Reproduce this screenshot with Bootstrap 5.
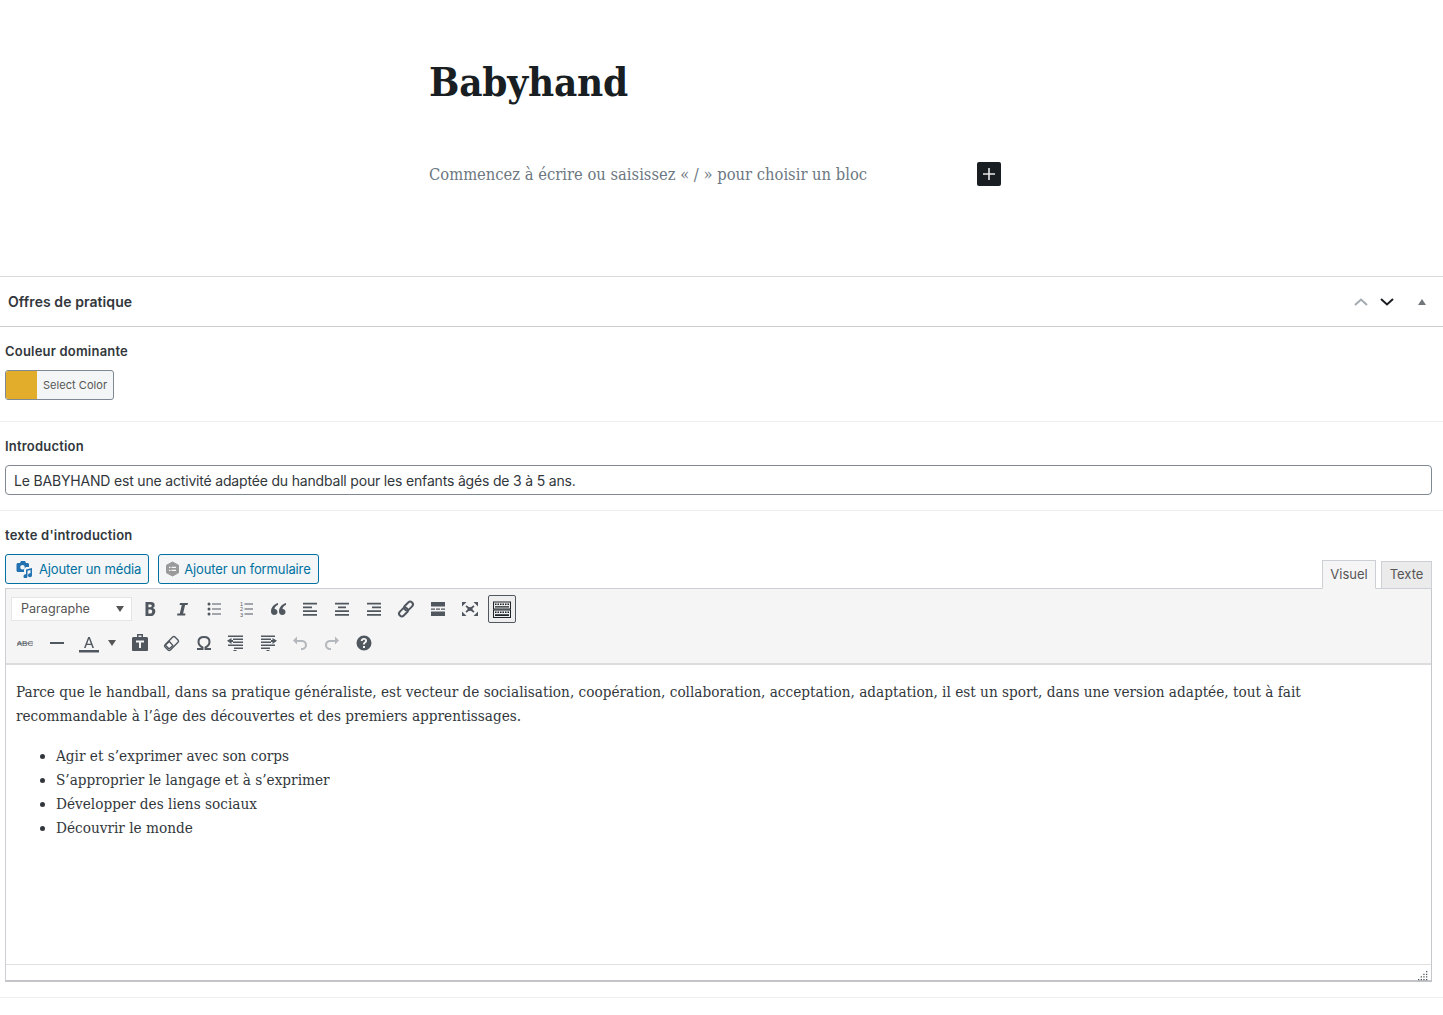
<!DOCTYPE html>
<html lang="fr">
<head>
<meta charset="utf-8">
<title>Babyhand</title>
<link href="https://cdn.jsdelivr.net/npm/bootstrap@5.3.0/dist/css/bootstrap.min.css" rel="stylesheet">
<style>
html,body{height:100%}
body{background:#fff;color:#32373c;font-family:"Inter","Liberation Sans",sans-serif;font-size:13px;overflow:hidden}
.serif-face{font-family:"DejaVu Serif Condensed","DejaVu Serif",serif}
.editor-head{height:276px;padding-left:429px;padding-top:53px}
.post-title{font-size:40px;font-weight:700;line-height:58px;color:#191e23;margin:0;letter-spacing:-.2px}
.appender-row{width:572px;margin-top:51px;height:24px}
.appender-text{font-size:16.4px;color:#6c7781;line-height:26px}
.plus-box{width:24px;height:24px;background:#191e23;border-radius:2px}
.box-head{height:51px;border-top:1px solid #d9d9d9;border-bottom:1px solid #ccc;padding:0 16px 0 8px}
.box-title{font-size:14px;font-weight:600;color:#32373c;letter-spacing:.08px}
.field-block{border-bottom:1px solid #eee;padding:0 11px 0 5px}
.block-color{height:95px;padding-top:15px}
.block-intro{height:89px;padding-top:15px}
.block-text{height:487px;padding-top:15px}
.field-label{font-size:13px;font-weight:600;line-height:18px;color:#32373c;height:18px;margin-bottom:10px;letter-spacing:.2px}
.color-pick{width:109px;height:30px;border:1px solid #7e8993;border-radius:3px;overflow:hidden;background:#f3f5f6}
.color-chip{width:31px;background:#e2ad2a}
.color-txt{font-size:11px;color:#555;padding-left:6px;line-height:28px;letter-spacing:.05px}
.intro-input{height:30px;border:1px solid #7e8993;border-radius:4px;font-size:14px;line-height:30px;padding:0 8px;color:#32373c;background:#fff;letter-spacing:-.18px}
.wp-btn{height:30px;border:1px solid #0071a1;border-radius:3px;background:#f3f5f6;color:#0071a1;font-size:13px;letter-spacing:-.13px;padding:0 7px 0 9px;gap:5px}
.wp-btn span{padding-top:1px}
.wp-btn-form{padding-left:6px;gap:4px}
.btn-strip{height:34px}
.tab-strip{align-self:flex-end;gap:5px}
.ed-tab{height:29px;width:54px;border:1px solid #ccd0d4;background:#f5f5f5;font-size:13px;color:#555;text-align:center;line-height:27px;margin-bottom:-1px;position:relative}
.ed-tab.is-on{border-bottom-color:#f5f5f5}
.ed-tab.is-off{background:#ebebeb;height:28px;width:51px;border-bottom-color:#ccd0d4;line-height:25px}
.ed-frame{border:1px solid #ccd0d4;border-bottom:2px solid #c3c4c7;border-right-color:#c5c8cb;height:394px}
.tool-area{background:#f5f5f5;height:76px;border-bottom:2px solid #dcdcde;padding:3px 5px 0}
.tool-row{height:34px}
.tool-row-low{margin-left:-2px}
.tool-btn{width:32px;height:34px;flex:none}
.tool-btn svg{display:block}
.fmt-select{width:121px;height:24px;background:#fff;border:1px solid #e5e5e5;font-size:12.6px;color:#555;padding:0 7px 0 9px;margin-right:2px}
.caret-down{width:0;height:0;border-left:4px solid transparent;border-right:4px solid transparent;border-top:6px solid #555}
.kbd-on{width:28px;height:28px;background:#eee;border:1px solid #50575e;border-radius:2px;margin:0 2px}
.caret-slot{width:20px;height:34px;margin-left:-4px;margin-right:3px;padding-left:7px}
.txt-body{height:299px;padding:15px 10px 0;font-size:15.2px;line-height:24px;color:#32373c}
.txt-body p{margin:0 0 16px;width:1320px}
.txt-body ul{margin:0;padding-left:40px}
.status-strip{height:17px;border-top:1px solid #e0e0e0;padding-right:3px}
</style>
</head>
<body>
<header class="editor-head serif-face">
  <h1 class="post-title">Babyhand</h1>
  <div class="appender-row d-flex justify-content-between align-items-start">
    <span class="appender-text">Commencez à écrire ou saisissez « / » pour choisir un bloc</span>
    <span class="plus-box d-flex align-items-center justify-content-center">
      <svg width="14" height="14" viewBox="0 0 14 14"><path d="M6.200 1h1.600v5.200H13v1.600H7.800V13H6.200V7.800H1V6.200h5.200z" fill="#e8e8e8"/></svg>
    </span>
  </div>
</header>

<section class="box-head d-flex align-items-center justify-content-between">
  <span class="box-title">Offres de pratique</span>
  <span class="d-flex align-items-center">
    <svg width="16" height="10" viewBox="0 0 16 10" style="margin-right:10px"><path d="M2 8l6-5.500L14 8" fill="none" stroke="#a2aab2" stroke-width="2"/></svg>
    <svg width="16" height="10" viewBox="0 0 16 10"><path d="M2 2l6 5.500L14 2" fill="none" stroke="#191e23" stroke-width="2"/></svg>
    <svg width="10" height="8" viewBox="0 0 10 8" style="margin-left:22px"><path d="M1 7L5 1l4 6z" fill="#72777c"/></svg>
  </span>
</section>

<section class="field-block block-color">
  <div class="field-label">Couleur dominante</div>
  <div class="color-pick d-flex">
    <span class="color-chip"></span><span class="color-txt">Select Color</span>
  </div>
</section>

<section class="field-block block-intro">
  <div class="field-label">Introduction</div>
  <div class="intro-input">Le BABYHAND est une activité adaptée du handball pour les enfants âgés de 3 à 5 ans.</div>
</section>

<section class="field-block block-text">
  <div class="field-label">texte d'introduction</div>
  <div class="btn-strip d-flex justify-content-between">
    <div class="d-flex" style="gap:9px">
      <div class="wp-btn d-flex align-items-center">
        <svg width="19" height="18" viewBox="0 0 19 18"><path d="M3 3h2l1-2h4l1 2h1.500c.8 0 1.500.7 1.500 1.500V7h-3L9 9v3H3c-.8 0-1.500-.7-1.500-1.500v-6C1.500 3.700 2.200 3 3 3zm4.500 2a2.300 2.300 0 100 4.600 2.300 2.300 0 000-4.600z" fill="#2271b1" fill-rule="evenodd"/><path d="M11 9.500l6-1.500v7.200a2 2 0 11-1.500-1.900V10l-3 .8v5.400a2 2 0 11-1.500-1.900z" fill="#2271b1"/></svg>
        <span>Ajouter un média</span>
      </div>
      <div class="wp-btn wp-btn-form d-flex align-items-center">
        <svg width="15" height="16" viewBox="0 0 15 16"><path d="M7.500 1l6 3.200v7.600l-6 3.200-6-3.200V4.200z" fill="#9a9a9a" stroke="#9a9a9a" stroke-linejoin="round"/><path d="M4 5.800h1.500V7H4zM6.500 5.800H11V7H6.500zM4 8.800h1.500V10H4zM6.500 8.800H11V10H6.500z" fill="#f3f5f6"/></svg>
        <span>Ajouter un formulaire</span>
      </div>
    </div>
    <div class="tab-strip d-flex align-items-end">
      <div class="ed-tab is-on">Visuel</div>
      <div class="ed-tab is-off">Texte</div>
    </div>
  </div>

  <div class="ed-frame">
    <div class="tool-area">
      <div class="tool-row d-flex align-items-center">
        <div class="fmt-select d-flex align-items-center justify-content-between"><span>Paragraphe</span><span class="caret-down"></span></div>
        <div class="tool-btn d-flex align-items-center justify-content-center"><svg width="20" height="20" viewBox="0 0 20 20"><path d="M5.500 3h5.300c2.500 0 3.900 1.200 3.900 3.200 0 1.300-.7 2.300-1.900 2.800 1.500.4 2.500 1.500 2.500 3.200 0 2.400-1.700 4.800-4.400 4.800H5.500zm2.900 2.400v2.800h1.800c1 0 1.600-.6 1.600-1.400s-.6-1.400-1.600-1.400zm0 5v4.200h2c1.100 0 1.800-.8 1.800-2.100s-.7-2.100-1.800-2.100z" fill="#50575e" fill-rule="evenodd"/></svg></div>
        <div class="tool-btn d-flex align-items-center justify-content-center"><svg width="20" height="20" viewBox="0 0 20 20"><path d="M8 4h8l-.4 2h-2.500l-2 8.500h2.400l-.4 2H5l.4-2h2.400l2-8.500H7.600z" fill="#50575e"/></svg></div>
        <div class="tool-btn d-flex align-items-center justify-content-center"><svg width="20" height="20" viewBox="0 0 20 20"><path d="M8 4.500h9v1H8zM8 9.500h9v1H8zM8 14.500h9v1H8z" fill="#50575e"/><circle cx="5" cy="5" r="1.500" fill="#50575e"/><circle cx="5" cy="10" r="1.500" fill="#50575e"/><circle cx="5" cy="15" r="1.500" fill="#50575e"/></svg></div>
        <div class="tool-btn d-flex align-items-center justify-content-center"><svg width="20" height="20" viewBox="0 0 20 20"><path d="M8.500 4.500H17v1H8.500zM8.500 9.500H17v1H8.500zM8.500 14.500H17v1H8.500z" fill="#50575e"/><text x="5.500" y="7" text-anchor="middle" font-family="Liberation Sans" font-size="5.500" fill="#50575e">1</text><text x="5.500" y="12" text-anchor="middle" font-family="Liberation Sans" font-size="5.500" fill="#50575e">2</text><text x="5.500" y="17.500" text-anchor="middle" font-family="Liberation Sans" font-size="5.500" fill="#50575e">3</text></svg></div>
        <div class="tool-btn d-flex align-items-center justify-content-center"><svg width="20" height="20" viewBox="0 0 20 20"><path d="M10 4C6.200 5 3 8.200 3 12.500 3 14.700 4.400 16 6.200 16 8 16 9.500 14.700 9.500 13c0-1.800-1.300-3-3-3 .3-2 1.700-3.400 3.500-4zM18 4c-3.800 1-7 4.200-7 8.500 0 2.200 1.400 3.500 3.200 3.500 1.800 0 3.300-1.300 3.300-3 0-1.800-1.300-3-3-3 .3-2 1.700-3.400 3.500-4z" fill="#50575e"/></svg></div>
        <div class="tool-btn d-flex align-items-center justify-content-center"><svg width="20" height="20" viewBox="0 0 20 20"><path d="M3 3.700h14v1.700H3zM3 7.500h9v1.700H3zM3 11.300h14V13H3zM3 15h14v1.700H3z" fill="#50575e"/></svg></div>
        <div class="tool-btn d-flex align-items-center justify-content-center"><svg width="20" height="20" viewBox="0 0 20 20"><path d="M3 3.700h14v1.700H3zM6 7.500h8v1.700H6zM3 11.300h14V13H3zM3 15h14v1.700H3z" fill="#50575e"/></svg></div>
        <div class="tool-btn d-flex align-items-center justify-content-center"><svg width="20" height="20" viewBox="0 0 20 20"><path d="M3 3.700h14v1.700H3zM8 7.500h9v1.700H8zM3 11.300h14V13H3zM3 15h14v1.700H3z" fill="#50575e"/></svg></div>
        <div class="tool-btn d-flex align-items-center justify-content-center"><svg width="20" height="20" viewBox="0 0 20 20"><g fill="none" stroke="#50575e" stroke-width="2"><rect x="9.800" y="2" width="5.500" height="10" rx="2.700" transform="rotate(45 12.500 7)"/><rect x="4.700" y="8" width="5.500" height="10" rx="2.700" transform="rotate(45 7.500 13)"/></g></svg></div>
        <div class="tool-btn d-flex align-items-center justify-content-center"><svg width="20" height="20" viewBox="0 0 20 20"><path d="M3 3h14v4.500H3zM3 12.500h14V17H3zM3 9.500h4v1.200H3zM8 9.500h4v1.200H8zM13 9.500h4v1.200h-4z" fill="#50575e"/></svg></div>
        <div class="tool-btn d-flex align-items-center justify-content-center"><svg width="20" height="20" viewBox="0 0 20 20"><path d="M2 3h4.500L2 7.500zM18 3h-4.500L18 7.500zM2 17h4.500L2 12.500zM18 17h-4.500l4.500-4.500z" fill="#50575e"/><path d="M6 7l8 6M14 7l-8 6" stroke="#50575e" stroke-width="1.600"/><path d="M7.500 8.200h5v3.600h-5z" fill="#50575e"/></svg></div>
        <div class="kbd-on d-flex align-items-center justify-content-center"><svg width="20" height="20" viewBox="0 0 20 20"><rect x="1.500" y="3" width="17" height="7" fill="#eee" stroke="#1d2327"/><rect x="1.500" y="11" width="17" height="7.500" fill="#eee" stroke="#1d2327"/><path d="M3 4.500h1.500V6H3zM5.500 4.500H7V6H5.500zM8 4.500h1.500V6H8zM10.500 4.500H12V6h-1.500zM13 4.500h1.500V6H13zM15.500 4.500H17V6h-1.500zM3 7.300h14v1.200H3zM3 12.500h1.500V14H3zM5.500 12.500H7V14H5.500zM8 12.500h1.500V14H8zM10.500 12.500H12V14h-1.500zM13 12.500h1.500V14H13zM15.500 12.500H17V14h-1.500zM3 15.300h14v1.700H3z" fill="#1d2327"/></svg></div>
      </div>
      <div class="tool-row tool-row-low d-flex align-items-center">
        <div class="tool-btn d-flex align-items-center justify-content-center"><svg width="20" height="20" viewBox="0 0 20 20"><text x="10" y="12.800" text-anchor="middle" font-family="Liberation Sans" font-size="8" fill="#50575e">ABC</text><path d="M2 9.800h16v.7H2z" fill="#50575e"/></svg></div>
        <div class="tool-btn d-flex align-items-center justify-content-center"><svg width="20" height="20" viewBox="0 0 20 20"><path d="M3 9h14v2H3z" fill="#50575e"/></svg></div>
        <div class="tool-btn d-flex align-items-center justify-content-center"><svg width="20" height="20" viewBox="0 0 20 20"><path d="M9.200 4h1.600l4.200 11h-1.600l-1.100-3H7.700l-1.100 3H5zM8.200 10.700h3.600L10 5.700z" fill="#50575e"/><path d="M0 17h20v2.500H0z" fill="#50575e"/></svg></div>
        <div class="caret-slot d-flex align-items-center"><span class="caret-down"></span></div>
        <div class="tool-btn d-flex align-items-center justify-content-center"><svg width="20" height="20" viewBox="0 0 20 20"><path d="M7 1h6v3h3.500c.8 0 1.500.7 1.500 1.500V17c0 .6-.5 1-1 1H3c-.6 0-1-.5-1-1V5.500C2 4.700 2.700 4 3.500 4H7zM8.500 2.500V4h3V2.500zM6 7.500v2h3v5.500h2V9.500h3v-2z" fill="#50575e" fill-rule="evenodd"/></svg></div>
        <div class="tool-btn d-flex align-items-center justify-content-center"><svg width="20" height="20" viewBox="0 0 20 20"><rect x="5.800" y="3.500" width="7.500" height="14" rx="1.600" transform="rotate(45 9.500 10.500)" fill="#f5f5f5" stroke="#50575e" stroke-width="1.400"/><path d="M7.300 8.500l3.500 3.900-3.200 3.100-.9.100-3-3 .1-.9z" fill="#fff" stroke="#50575e" stroke-width="1.400" stroke-linejoin="round"/></svg></div>
        <div class="tool-btn d-flex align-items-center justify-content-center"><svg width="20" height="20" viewBox="0 0 20 20"><path d="M3 16h5.500v-1.500C5.500 13 4.500 11 4.500 8.800 4.500 5.500 7 4 10 4s5.500 1.500 5.500 4.800c0 2.200-1 4.200-4 5.700V16H17" fill="none" stroke="#50575e" stroke-width="2"/></svg></div>
        <div class="tool-btn d-flex align-items-center justify-content-center"><svg width="20" height="20" viewBox="0 0 20 20"><path d="M2 2.500h15V4H2zM7 5.500h10V7H7zM7 8.500h10V10H7zM2 11.500h15V13H2zM8 14.500h9V16H8zM7.500 17h3v1h-3zM1 7.800L5.500 5v2H7v2H5.500v2z" fill="#50575e"/></svg></div>
        <div class="tool-btn d-flex align-items-center justify-content-center"><svg width="20" height="20" viewBox="0 0 20 20"><path d="M3 2.500h14V4H3zM3 5.500h10V7H3zM3 8.500h10V10H3zM3 11.500h14V13H3zM3 14.500h9V16H3zM8.500 17h3v1h-3zM19 7.800L14.500 5v2H13v2h1.500v2z" fill="#50575e"/></svg></div>
        <div class="tool-btn d-flex align-items-center justify-content-center"><svg width="20" height="20" viewBox="0 0 20 20"><path d="M7 3.500L3 7.500l4 4V9h5c1.700 0 3 1.300 3 3s-1.300 3-3 3h-1v2h1c2.800 0 5-2.200 5-5s-2.200-5-5-5H7z" fill="#b4b9be"/></svg></div>
        <div class="tool-btn d-flex align-items-center justify-content-center"><svg width="20" height="20" viewBox="0 0 20 20"><path d="M13 3.500l4 4-4 4V9H8c-1.700 0-3 1.300-3 3s1.300 3 3 3h1v2H8c-2.800 0-5-2.200-5-5s2.200-5 5-5h5z" fill="#b4b9be"/></svg></div>
        <div class="tool-btn d-flex align-items-center justify-content-center"><svg width="20" height="20" viewBox="0 0 20 20"><path d="M10 2.500a7.500 7.500 0 110 15 7.500 7.500 0 010-15zm-1 10.500v2h2v-2zm1-8c-1.900 0-3.200 1.100-3.300 2.900h2c.1-.7.500-1.100 1.200-1.100s1.100.4 1.100 1c0 .5-.3.800-.8 1.200-.9.700-1.200 1.200-1.200 2.500h1.900c0-.8.200-1.100.9-1.600.9-.7 1.200-1.300 1.200-2.200C13 6.100 11.800 5 10 5z" fill="#50575e" fill-rule="evenodd"/></svg></div>
      </div>
    </div>
    <div class="txt-body serif-face">
      <p>Parce que le handball, dans sa pratique généraliste, est vecteur de socialisation, coopération, collaboration, acceptation, adaptation, il est un sport, dans une version adaptée, tout à fait recommandable à l’âge des découvertes et des premiers apprentissages.</p>
      <ul>
        <li>Agir et s’exprimer avec son corps</li>
        <li>S’approprier le langage et à s’exprimer</li>
        <li>Développer des liens sociaux</li>
        <li>Découvrir le monde</li>
      </ul>
    </div>
    <div class="status-strip d-flex justify-content-end align-items-end">
      <svg width="10" height="10" viewBox="0 0 10 10"><path d="M8 0h1.300v1.300H8zM8 2.700h1.300V4H8zM5.300 2.700h1.300V4H5.300zM8 5.300h1.300v1.300H8zM5.300 5.300h1.300v1.300H5.300zM2.700 5.300H4v1.300H2.700zM8 8h1.300v1.300H8zM5.300 8h1.300v1.300H5.300zM2.700 8H4v1.300H2.700zM0 8h1.300v1.300H0z" fill="#50575e"/></svg>
    </div>
  </div>
</section>
<script src="https://cdn.jsdelivr.net/npm/bootstrap@5.3.0/dist/js/bootstrap.bundle.min.js"></script>
</body>
</html>
